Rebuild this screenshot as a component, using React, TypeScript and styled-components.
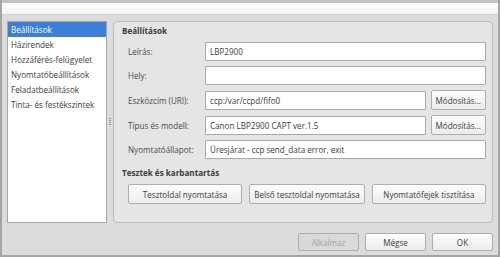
import styled, { createGlobalStyle } from "styled-components";

const GlobalStyle = createGlobalStyle`
  html, body {
    margin: 0;
    padding: 0;
    background: #dcdcdc;
  }
  body {
    font-family: "Open Sans", "DejaVu Sans", sans-serif;
    font-size: 8.1px;
    color: #3c3c3c;
  }
`;

const pages = [
  "Beállítások",
  "Házirendek",
  "Hozzáférés-felügyelet",
  "Nyomtatóbeállítások",
  "Feladatbeállítások",
  "Tinta- és festékszintek",
];

const Window = styled.div`
  width: 500px;
  height: 257px;
  box-sizing: border-box;
  display: flex;
  flex-direction: column;
  background: #dcdcdc;
  border-left: 2px solid #a4a4a4;
  border-right: 2px solid #a4a4a4;
  border-bottom: 2px solid #a4a4a4;
`;

const TitleStrip = styled.div`
  height: 11px;
  flex: none;
  border-top: 3px solid #c2c2c2;
  border-bottom: 1px solid #d2d2d2;
  background: linear-gradient(#ffffff, #f3f3f3);
`;

const Body = styled.div`
  flex: 1;
  display: flex;
  flex-direction: column;
  padding: 6px 5px 4px 5px;
`;

const Main = styled.div`
  display: flex;
  height: 202px;
`;

const PageList = styled.ul`
  list-style: none;
  margin: 0;
  padding: 0;
  width: 100px;
  box-sizing: border-box;
  background: #ffffff;
  border: 1px solid #a6a6a6;
`;

const PageItem = styled.li<{ $active?: boolean }>`
  height: 15px;
  line-height: 15px;
  padding-left: 3px;
  white-space: nowrap;
  color: ${(p) => (p.$active ? "#ffffff" : "#3c3c3c")};
  background: ${(p) => (p.$active ? "#3d7ed6" : "transparent")};
`;

const Splitter = styled.div`
  width: 6px;
  display: flex;
  align-items: center;
  justify-content: center;
`;

const Grip = styled.div`
  width: 2px;
  height: 8px;
  background: repeating-linear-gradient(#9a9a9a 0 1px, transparent 1px 2px);
`;

const Panel = styled.section`
  flex: 1;
  box-sizing: border-box;
  border: 1px solid #bcbcbc;
  border-radius: 4px;
  background: #e5e5e5;
  padding: 3px 6px 0 8px;
`;

const Heading = styled.div`
  font-weight: bold;
  line-height: 12px;
  color: #3c3c3c;
`;

const Form = styled.div`
  display: grid;
  grid-template-columns: 72px 1fr auto;
  row-gap: 5px;
  column-gap: 5px;
  margin: 5px 0 0 6px;
  align-items: center;
`;

const Label = styled.label`
  color: #4a4a4a;
  white-space: nowrap;
`;

const Field = styled.div<{ $wide?: boolean }>`
  grid-column: ${(p) => (p.$wide ? "2 / 4" : "2 / 3")};
  height: 19px;
  box-sizing: border-box;
  border: 1px solid #a8a8a8;
  border-radius: 1px;
  background: #ffffff;
  padding-left: 4px;
  line-height: 17px;
  color: #3c3c3c;
  white-space: nowrap;
  overflow: hidden;
`;

const Button = styled.button<{ $disabled?: boolean }>`
  height: ${(p) => (p.$disabled ? "18px" : "20px")};
  box-sizing: border-box;
  border: 1px solid #aeaeae;
  border-radius: 2px;
  background: ${(p) =>
    p.$disabled ? "#d9d9d9" : "linear-gradient(#fdfdfd, #ececec)"};
  color: ${(p) => (p.$disabled ? "#a3a3a3" : "#3c3c3c")};
  font-family: inherit;
  font-size: 8.1px;
  padding: 0 4px;
  white-space: nowrap;
`;

const SubHeading = styled(Heading)`
  margin-top: 8px;
`;

const TestRow = styled.div`
  display: grid;
  grid-template-columns: 1fr 1fr 1fr;
  column-gap: 7px;
  margin: 5px 0 0 6px;
`;

const Footer = styled.div`
  display: flex;
  justify-content: flex-end;
  gap: 6px;
  margin-top: 10px;
  & > button {
    width: 61px;
    height: 18px;
  }
`;

export default function App() {
  return (
    <>
      <GlobalStyle />
      <Window>
        <TitleStrip />
        <Body>
          <Main>
            <PageList>
              {pages.map((p, i) => (
                <PageItem key={p} $active={i === 0}>
                  {p}
                </PageItem>
              ))}
            </PageList>
            <Splitter>
              <Grip />
            </Splitter>
            <Panel>
              <Heading>Beállítások</Heading>
              <Form>
                <Label>Leírás:</Label>
                <Field $wide>LBP2900</Field>
                <Label>Hely:</Label>
                <Field $wide />
                <Label>Eszközcím (URI):</Label>
                <Field>ccp:/var/ccpd/fifo0</Field>
                <Button>Módosítás...</Button>
                <Label>Típus és modell:</Label>
                <Field>Canon LBP2900 CAPT ver.1.5</Field>
                <Button>Módosítás...</Button>
                <Label>Nyomtatóállapot:</Label>
                <Field $wide>Üresjárat - ccp send_data error, exit</Field>
              </Form>
              <SubHeading>Tesztek és karbantartás</SubHeading>
              <TestRow>
                <Button>Tesztoldal nyomtatása</Button>
                <Button>Belső tesztoldal nyomtatása</Button>
                <Button>Nyomtatófejek tisztítása</Button>
              </TestRow>
            </Panel>
          </Main>
          <Footer>
            <Button $disabled>Alkalmaz</Button>
            <Button>Mégse</Button>
            <Button>OK</Button>
          </Footer>
        </Body>
      </Window>
    </>
  );
}
